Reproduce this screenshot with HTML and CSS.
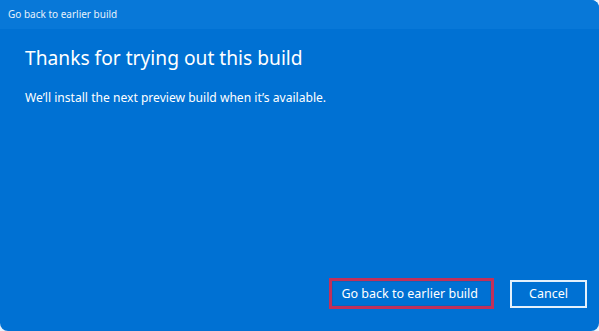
FILE: index.html
```html
<!DOCTYPE html>
<html lang="en">
<head>
<meta charset="utf-8">
<link rel="stylesheet" href="styles.css">
</head>
<body>
<div class="window">
  <div class="titlebar">Go back to earlier build</div>
  <div class="content">
    <h1 class="heading">Thanks for trying out this build</h1>
    <p class="message">We’ll install the next preview build when it’s available.</p>
  </div>
  <div class="footer">
    <div class="highlight"><button class="btn primary">Go back to earlier build</button></div>
    <button class="btn cancel">Cancel</button>
  </div>
</div>
</body>
</html>
```
FILE: styles.css
```css
html, body {
  margin: 0;
  padding: 0;
  background: #eaf2fb;
}
body {
  width: 599px;
  height: 331px;
  overflow: hidden;
  font-family: "Noto Sans", "Open Sans", sans-serif;
  color: #ffffff;
}
.window {
  width: 599px;
  height: 331px;
  box-sizing: border-box;
  background: #0071d3;
  border-radius: 0 8px 8px 8px;
  display: flex;
  flex-direction: column;
  overflow: hidden;
}
.titlebar {
  height: 29px;
  box-sizing: border-box;
  padding: 7px 0 0 8px;
  background: #0878d8;
  font-size: 10px;
  line-height: 14px;
  color: #e6f1fb;
}
.content {
  flex: 1;
  padding: 15px 0 0 25px;
}
.heading {
  margin: 0;
  font-weight: 400;
  font-size: 19.2px;
  line-height: 28px;
  color: #ffffff;
}
.message {
  margin: 18px 0 0 0;
  font-size: 12.1px;
  line-height: 16px;
  color: #ffffff;
}
.footer {
  display: flex;
  justify-content: flex-end;
  align-items: center;
  gap: 16px;
  padding: 0 12px 22px 0;
}
.highlight {
  border: 3px solid #c2305a;
  padding: 0;
  display: flex;
}
.btn {
  font-family: "Noto Sans", "Open Sans", sans-serif;
  font-size: 12.5px;
  color: #ffffff;
  background: transparent;
  margin: 0;
  cursor: pointer;
}
.primary {
  border: 1px solid #0a66bd;
  height: 25px;
  padding: 0 12px 1px 8px;
}
.cancel {
  border: 2px solid #e4f0fb;
  width: 77px;
  height: 28px;
  padding: 0 0 1px 0;
}
```
